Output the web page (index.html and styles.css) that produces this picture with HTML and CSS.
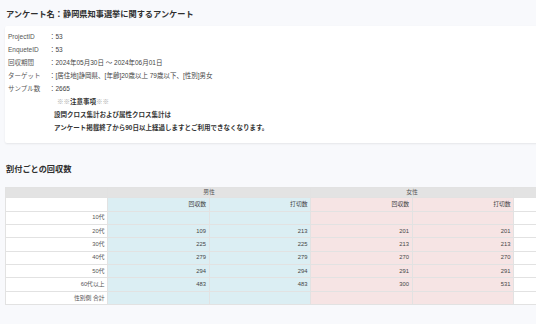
FILE: index.html
```html
<!DOCTYPE html>
<html lang="ja">
<head>
<meta charset="utf-8">
<link rel="stylesheet" href="styles.css">
</head>
<body>
<div class="page">
  <h1 class="title">アンケート名：静岡県知事選挙に関するアンケート</h1>
  <div class="card">
    <div class="info">
      <div class="row"><span class="label">ProjectID</span><span class="value">：53</span></div>
      <div class="row"><span class="label">EnqueteID</span><span class="value">：53</span></div>
      <div class="row"><span class="label">回収期間</span><span class="value">：2024年05月30日 ～ 2024年06月01日</span></div>
      <div class="row"><span class="label">ターゲット</span><span class="value">：[居住地]静岡県、[年齢]20歳以上 79歳以下、[性別]男女</span></div>
      <div class="row"><span class="label">サンプル数</span><span class="value">：2665</span></div>
    </div>
    <div class="notice">
      <p class="notice-head"><span class="mark">※※</span>注意事項<span class="mark">※※</span></p>
      <p>設問クロス集計および属性クロス集計は</p>
      <p>アンケート掲載終了から90日以上経過しますとご利用できなくなります。</p>
    </div>
  </div>
  <h2 class="section">割付ごとの回収数</h2>
  <table class="grid">
    <colgroup>
      <col class="c-label"><col class="c-num"><col class="c-num"><col class="c-num"><col class="c-num"><col class="c-extra">
    </colgroup>
    <tr class="r-head">
      <th></th><th colspan="2">男性</th><th colspan="2">女性</th><th></th>
    </tr>
    <tr class="r-sub">
      <td class="lbl"></td><td class="m">回収数</td><td class="m">打切数</td><td class="f">回収数</td><td class="f">打切数</td><td></td>
    </tr>
    <tr class="r-data"><td class="lbl">10代</td><td class="m"></td><td class="m"></td><td class="f"></td><td class="f"></td><td></td></tr>
    <tr class="r-data"><td class="lbl">20代</td><td class="m">109</td><td class="m">213</td><td class="f">201</td><td class="f">201</td><td></td></tr>
    <tr class="r-data"><td class="lbl">30代</td><td class="m">225</td><td class="m">225</td><td class="f">213</td><td class="f">213</td><td></td></tr>
    <tr class="r-data"><td class="lbl">40代</td><td class="m">279</td><td class="m">279</td><td class="f">270</td><td class="f">270</td><td></td></tr>
    <tr class="r-data"><td class="lbl">50代</td><td class="m">294</td><td class="m">294</td><td class="f">291</td><td class="f">291</td><td></td></tr>
    <tr class="r-data"><td class="lbl">60代以上</td><td class="m">483</td><td class="m">483</td><td class="f">300</td><td class="f">531</td><td></td></tr>
    <tr class="r-data"><td class="lbl">性別側 合計</td><td class="m"></td><td class="m"></td><td class="f"></td><td class="f"></td><td></td></tr>
  </table>
</div>
</body>
</html>
```
FILE: styles.css
```css
html, body {
  margin: 0;
  padding: 0;
  overflow: hidden;
  background: #f8f9fc;
}
body {
  font-family: "Liberation Sans", "Noto Sans CJK JP", sans-serif;
  color: #333;
}
.page {
  width: 640px;
}
.title {
  margin: 0;
  padding: 4px 0 0 6px;
  height: 22px;
  line-height: 22px;
  font-size: 8.2px;
  font-weight: bold;
  color: #2f2f2f;
}
.card {
  margin-left: 5px;
  background: #fff;
  padding: 4px 0 9px 3px;
  box-shadow: 0 1px 2px rgba(0,0,0,0.08);
  border-radius: 2px;
}
.info .row {
  display: flex;
  height: 13px;
  line-height: 13px;
  font-size: 6.5px;
}
.label {
  width: 41px;
  color: #555;
}
.value {
  color: #444;
}
.notice {
  padding-left: 46px;
}
.notice p {
  margin: 0;
  height: 13px;
  line-height: 13px;
  font-size: 6.5px;
  font-weight: bold;
  color: #333;
}
.notice .mark {
  font-weight: normal;
  color: #aaa;
}
.notice-head {
  padding-left: 3px;
}
.section {
  margin: 19px 0 8.5px 6px;
  height: 16px;
  line-height: 16px;
  font-size: 8.2px;
  font-weight: bold;
  color: #2f2f2f;
}
.grid {
  margin-left: 5px;
  border-collapse: collapse;
  table-layout: fixed;
  width: 608px;
  font-size: 5.8px;
  color: #444;
}
.c-label { width: 102px; }
.c-num { width: 101.5px; }
.c-extra { width: 100px; }
.grid th, .grid td {
  border: 1px solid #e2e2e2;
  padding: 0 2.5px;
  line-height: 7px;
  text-align: right;
  background: #fff;
}
.grid th {
  background: #e3e3e3;
  font-weight: normal;
  text-align: center;
  color: #555;
}
.r-head { height: 10.5px; }
.r-sub { height: 13.5px; }
.r-data { height: 13.4px; }
.grid td.m { background: #dbeef3; }
.grid td.f { background: #f6e4e4; }
.grid td.lbl { color: #555; }
```
